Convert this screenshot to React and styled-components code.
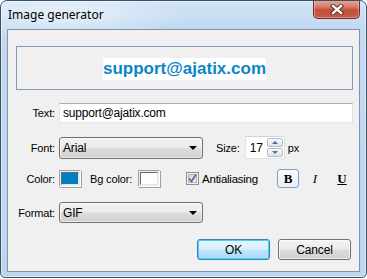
import React from 'react';
import styled, { createGlobalStyle } from 'styled-components';

const Global = createGlobalStyle`
  html, body { margin: 0; padding: 0; background: #ffffff; }
  body { font-family: "Liberation Sans", Arial, sans-serif; font-size: 11px; letter-spacing: -0.15px; color: #000; }
  * { box-sizing: border-box; }
`;

const Window = styled.div`
  width: 367px;
  height: 278px;
  border: 1px solid #3f4f63;
  border-radius: 7px 7px 5px 5px;
  background:
    radial-gradient(ellipse 120px 26px at 60px 14px, rgba(255,255,255,0.55), rgba(255,255,255,0) 100%),
    linear-gradient(180deg, #d2e4f7 0px, #c2d9f1 28px, #bdd6f0 100%);
  box-shadow: inset 0 0 0 1px rgba(255,255,255,0.5);
  display: flex;
  flex-direction: column;
  overflow: hidden;
`;

const TitleBar = styled.div`
  height: 28px;
  display: flex;
  align-items: flex-start;
  padding: 0 6px 0 7px;
`;

const Title = styled.div`
  flex: 1;
  font-family: "Noto Sans", "Open Sans", sans-serif;
  font-size: 12px;
  letter-spacing: 0;
  line-height: 16px;
  margin-top: 6px;
  color: #000;
`;

const CloseButton = styled.div`
  width: 47px;
  height: 19px;
  margin-top: -1px;
  border: 1px solid #6b2a22;
  border-top: none;
  border-radius: 0 0 5px 5px;
  background: linear-gradient(180deg, #e9a99b 0%, #d9826f 35%, #c2503c 55%, #c75a45 100%);
  box-shadow: inset 0 0 0 1px rgba(255,255,255,0.35);
  display: flex;
  align-items: center;
  justify-content: center;
`;

const Client = styled.div`
  flex: 1;
  margin: 0 6px 5px 6px;
  border: 1px solid #8193a9;
  background: #f0f0f0;
  padding: 16px 6px 0 8px;
  display: flex;
  flex-direction: column;
`;

const Preview = styled.div`
  height: 44px;
  border: 1px solid #7f9db9;
  display: flex;
  align-items: center;
  justify-content: center;
`;

const PreviewText = styled.span`
  font-family: "Liberation Sans", Arial, sans-serif;
  font-weight: bold;
  font-size: 17px;
  letter-spacing: 0;
  line-height: 22px;
  background: #ffffff;
  color: #0a86c6;
  margin-top: 1px;
`;

const Row = styled.div`
  display: flex;
  align-items: center;
  margin-top: ${p => p.$top}px;
  height: ${p => p.$h}px;
  justify-content: ${p => (p.$end ? 'flex-end' : 'flex-start')};
`;

const Label = styled.label`
  width: 39px;
  text-align: right;
  margin-right: 4px;
  white-space: nowrap;
`;

const InlineLabel = styled.span`
  margin-left: ${p => p.$ml || 0}px;
  margin-right: ${p => p.$mr || 0}px;
  white-space: nowrap;
`;

const TextInput = styled.div`
  flex: 1;
  height: 20px;
  background: #fff;
  border: 1px solid #abadb3;
  border-left-color: #e2e3ea;
  border-right-color: #dbdfe6;
  border-bottom-color: #e3e9ef;
  padding: 0 3px;
  display: flex;
  align-items: center;
  font-size: 12px;
  letter-spacing: -0.2px;
`;

const Combo = styled.div`
  width: 144px;
  height: ${p => p.$h}px;
  border: 1px solid #707070;
  border-radius: 3px;
  background: linear-gradient(180deg, #f2f2f2 0%, #ebebeb 48%, #dddddd 52%, #cfcfcf 100%);
  box-shadow: inset 0 0 0 1px rgba(255,255,255,0.6);
  display: flex;
  align-items: center;
  padding: 0 5px 0 3px;
  font-size: 12px;
`;

const ComboText = styled.span`
  flex: 1;
`;

const Arrow = styled.span`
  width: 0;
  height: 0;
  border-left: 4px solid transparent;
  border-right: 4px solid transparent;
  border-top: 4px solid #000;
`;

const Spinner = styled.div`
  width: 40px;
  height: 23px;
  background: #fff;
  border: 1px solid #e3e3e3;
  border-top-color: #d5d5d5;
  display: flex;
  align-items: stretch;
  padding: 1px 1px 1px 4px;
`;

const SpinValue = styled.span`
  flex: 1;
  display: flex;
  align-items: center;
  font-size: 12px;
`;

const SpinButtons = styled.div`
  width: 16px;
  display: flex;
  flex-direction: column;
  gap: 1px;
`;

const SpinButton = styled.div`
  flex: 1;
  border: 1px solid #b6bcc8;
  border-radius: 2px;
  background: linear-gradient(180deg, #f6f7f9, #dfe3ea);
  display: flex;
  align-items: center;
  justify-content: center;
`;

const SpinArrow = styled.span`
  width: 0;
  height: 0;
  border-left: 3px solid transparent;
  border-right: 3px solid transparent;
  ${p => (p.$up ? 'border-bottom: 3px solid #4c6ea5;' : 'border-top: 3px solid #4c6ea5;')}
`;

const Swatch = styled.div`
  width: 22px;
  height: 17px;
  border: 1px solid #a0a0a0;
  border-right-color: #ffffff;
  border-bottom-color: #ffffff;
  box-shadow: 1px 1px 0 #a0a0a0;
  padding: 1px;
  background: #f0f0f0;
`;

const SwatchFill = styled.div`
  width: 100%;
  height: 100%;
  background: ${p => p.$color};
  border: 1px solid #696969;
  border-right-color: #e3e3e3;
  border-bottom-color: #e3e3e3;
`;

const CheckWrap = styled.div`
  margin-left: 26px;
  display: flex;
  align-items: center;
  gap: 3px;
  font-size: 11.5px;
  letter-spacing: -0.25px;
`;

const StyleButtons = styled.div`
  margin-left: auto;
  display: flex;
  gap: 5px;
`;

const StyleButton = styled.div`
  width: 22px;
  height: 19px;
  border: 1px solid ${p => (p.$active ? '#7f9dc6' : 'transparent')};
  border-radius: 3px;
  background: ${p => (p.$active ? 'linear-gradient(180deg, #fbfcfe, #e6eef8)' : 'transparent')};
  display: flex;
  align-items: center;
  justify-content: center;
  font-family: "Liberation Serif", "Times New Roman", serif;
  font-size: 13px;
  letter-spacing: 0;
  font-weight: ${p => (p.$italic ? 'normal' : 'bold')};
  font-style: ${p => (p.$italic ? 'italic' : 'normal')};
  text-decoration: ${p => (p.$underline ? 'underline' : 'none')};
`;

const PushButton = styled.div`
  width: 73px;
  height: 21px;
  margin-left: ${p => p.$ml || 0}px;
  margin-right: ${p => p.$mr || 0}px;
  border: 1px solid ${p => (p.$default ? '#3c7fb1' : '#707070')};
  border-radius: 3px;
  background: ${p =>
    p.$default
      ? 'linear-gradient(180deg, #e9f5fc 0%, #d9effb 48%, #bee6fd 52%, #a7d9f5 100%)'
      : 'linear-gradient(180deg, #f2f2f2 0%, #ebebeb 48%, #dddddd 52%, #cfcfcf 100%)'};
  box-shadow: inset 0 0 0 1px ${p => (p.$default ? '#48d0f8' : 'rgba(255,255,255,0.7)')};
  display: flex;
  align-items: center;
  justify-content: center;
  font-size: 12px;
`;

function CloseGlyph() {
  return (
    <svg width="14" height="11" viewBox="0 0 14 11">
      <path d="M3 2 L11 9 M11 2 L3 9" stroke="#4a2320" strokeWidth="4.2" strokeLinecap="square" fill="none" />
      <path d="M3 2 L11 9 M11 2 L3 9" stroke="#ffffff" strokeWidth="2.4" strokeLinecap="square" fill="none" />
    </svg>
  );
}

function CheckBox() {
  return (
    <svg width="13" height="13" viewBox="0 0 13 13">
      <defs>
        <linearGradient id="cbg" x1="0" y1="0" x2="1" y2="1">
          <stop offset="0" stopColor="#cfcfcf" />
          <stop offset="1" stopColor="#f4f4f4" />
        </linearGradient>
      </defs>
      <rect x="0.5" y="0.5" width="12" height="12" fill="#f4f4f4" stroke="#8f8f8f" />
      <rect x="2.5" y="2.5" width="8" height="8" fill="url(#cbg)" stroke="#b4b4b4" />
      <path d="M3 6.5 L5.5 9.5 L10 2.5" stroke="#4d62a0" strokeWidth="1.6" fill="none" />
    </svg>
  );
}

export default function App() {
  return (
    <>
      <Global />
      <Window>
        <TitleBar>
          <Title>Image generator</Title>
          <CloseButton>
            <CloseGlyph />
          </CloseButton>
        </TitleBar>
        <Client>
          <Preview>
            <PreviewText>support@ajatix.com</PreviewText>
          </Preview>

          <Row $top={13} $h={20}>
            <Label>Text:</Label>
            <TextInput>support@ajatix.com</TextInput>
          </Row>

          <Row $top={13} $h={23}>
            <Label>Font:</Label>
            <Combo $h={22}>
              <ComboText>Arial</ComboText>
              <Arrow />
            </Combo>
            <InlineLabel $ml={13} $mr={5}>Size:</InlineLabel>
            <Spinner>
              <SpinValue>17</SpinValue>
              <SpinButtons>
                <SpinButton><SpinArrow $up /></SpinButton>
                <SpinButton><SpinArrow /></SpinButton>
              </SpinButtons>
            </Spinner>
            <InlineLabel $ml={3}>px</InlineLabel>
          </Row>

          <Row $top={10} $h={19}>
            <Label>Color:</Label>
            <Swatch><SwatchFill $color="#0080c0" /></Swatch>
            <InlineLabel $ml={9} $mr={6}>Bg color:</InlineLabel>
            <Swatch><SwatchFill $color="#ffffff" /></Swatch>
            <CheckWrap>
              <CheckBox />
              <span>Antialiasing</span>
            </CheckWrap>
            <StyleButtons>
              <StyleButton $active>B</StyleButton>
              <StyleButton $italic>I</StyleButton>
              <StyleButton $underline>U</StyleButton>
            </StyleButtons>
          </Row>

          <Row $top={14} $h={21}>
            <Label>Format:</Label>
            <Combo $h={21}>
              <ComboText>GIF</ComboText>
              <Arrow />
            </Combo>
          </Row>

          <Row $top={16} $h={21} $end>
            <PushButton $default>OK</PushButton>
            <PushButton $ml={8} $mr={2}>Cancel</PushButton>
          </Row>
        </Client>
      </Window>
    </>
  );
}
